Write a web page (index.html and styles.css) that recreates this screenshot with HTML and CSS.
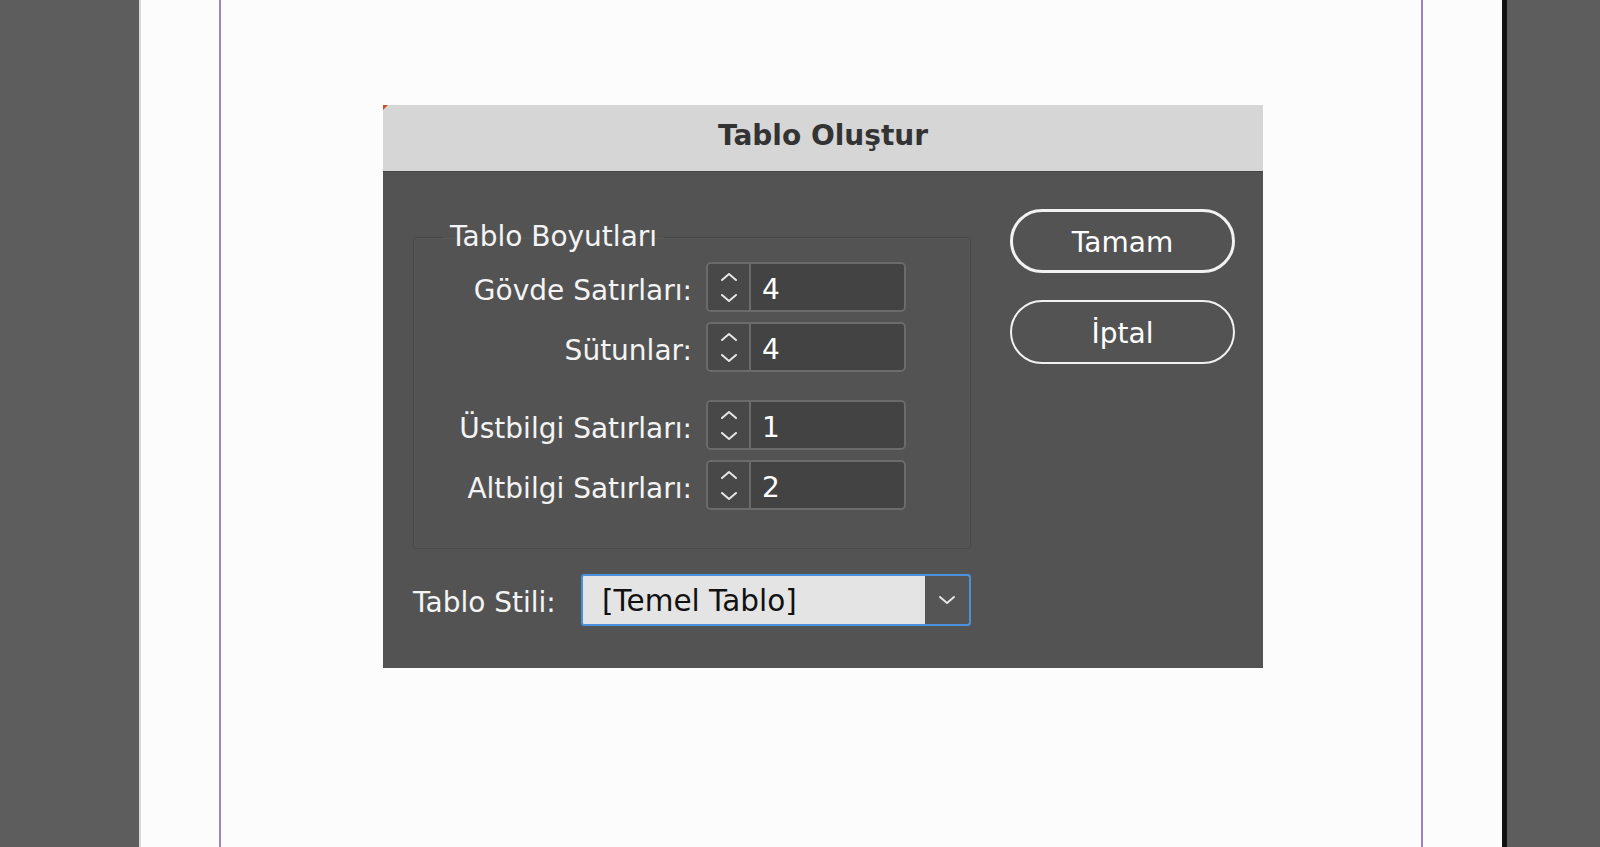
FILE: index.html
```html
<!DOCTYPE html>
<html lang="tr">
<head>
    <meta charset="UTF-8">
    <title>Tablo Oluştur</title>
    <link rel="stylesheet" href="styles.css">
</head>
<body>
<div class="desk">
    <div class="pasteboard"></div>
    <div class="page">
        <div class="margins"></div>
    </div>
    <div class="page-edge"></div>
    <div class="pasteboard pasteboard-right"></div>
</div>

<div class="dialog">
    <div class="dialog-title">Tablo Oluştur</div>
    <div class="dialog-body">
        <div class="dialog-main">
            <fieldset class="group">
                <legend>Tablo Boyutları</legend>

                <div class="field">
                    <label>Gövde Satırları:</label>
                    <div class="spinner">
                        <div class="stepper">
                            <svg width="18" height="9" viewBox="0 0 18 9"><polyline points="2,8 9,2 16,8"/></svg>
                            <svg width="18" height="9" viewBox="0 0 18 9"><polyline points="2,1 9,7 16,1"/></svg>
                        </div>
                        <div class="value">4</div>
                    </div>
                </div>
                <div class="field">
                    <label>Sütunlar:</label>
                    <div class="spinner">
                        <div class="stepper">
                            <svg width="18" height="9" viewBox="0 0 18 9"><polyline points="2,8 9,2 16,8"/></svg>
                            <svg width="18" height="9" viewBox="0 0 18 9"><polyline points="2,1 9,7 16,1"/></svg>
                        </div>
                        <div class="value">4</div>
                    </div>
                </div>

                <div class="field field-split">
                    <label>Üstbilgi Satırları:</label>
                    <div class="spinner">
                        <div class="stepper">
                            <svg width="18" height="9" viewBox="0 0 18 9"><polyline points="2,8 9,2 16,8"/></svg>
                            <svg width="18" height="9" viewBox="0 0 18 9"><polyline points="2,1 9,7 16,1"/></svg>
                        </div>
                        <div class="value">1</div>
                    </div>
                </div>
                <div class="field">
                    <label>Altbilgi Satırları:</label>
                    <div class="spinner">
                        <div class="stepper">
                            <svg width="18" height="9" viewBox="0 0 18 9"><polyline points="2,8 9,2 16,8"/></svg>
                            <svg width="18" height="9" viewBox="0 0 18 9"><polyline points="2,1 9,7 16,1"/></svg>
                        </div>
                        <div class="value">2</div>
                    </div>
                </div>
            </fieldset>

            <div class="style-row">
                <label>Tablo Stili:</label>
                <div class="select">
                    <div class="select-text">[Temel Tablo]</div>
                    <div class="select-arrow">
                        <svg width="18" height="10" viewBox="0 0 18 10"><polyline points="2,2 9,8 16,2"/></svg>
                    </div>
                </div>
            </div>
        </div>

        <div class="dialog-buttons">
            <div class="btn btn-default">Tamam</div>
            <div class="btn">İptal</div>
        </div>
    </div>
</div>
</body>
</html>
```

FILE: styles.css
```css
* {
    box-sizing: border-box;
}

html, body {
    margin: 0;
    padding: 0;
    height: 100%;
}

body {
    font-family: "DejaVu Sans", Verdana, sans-serif;
    overflow: hidden;
    background: #5d5d5d;
}

/* document window behind the dialog */
.desk {
    display: flex;
    height: 847px;
}

.pasteboard {
    width: 139px;
    background: #5d5d5d;
}

.pasteboard-right {
    flex: 1;
}

.page {
    width: 1363px;
    background: #fcfcfc;
    border-left: 2px solid #d9d9d9;
    padding-left: 78px;
}

.margins {
    width: 1204px;
    height: 100%;
    border-left: 2px solid #9b82c6;
    border-right: 2px solid #9b82c6;
}

.page-edge {
    width: 5px;
    background: #121212;
}

/* the modal */
.dialog {
    position: absolute;
    left: 383px;
    top: 105px;
    width: 880px;
    height: 563px;
    background: #535353;
    color: #f4f4f4;
}

.dialog:before {
    content: "";
    position: absolute;
    left: 0;
    top: 0;
    border-top: 5px solid #c8502e;
    border-right: 5px solid transparent;
}

.dialog-title {
    height: 67px;
    line-height: 62px;
    background: #d6d6d6;
    color: #333;
    font-size: 28px;
    font-weight: bold;
    text-align: center;
    border-bottom: 1px solid #474747;
}

.dialog-body {
    display: flex;
    padding: 37px 28px 0 30px;
}

.dialog-main {
    width: 558px;
    margin-right: 39px;
}

.group {
    margin: 11px 0 0 0;
    padding: 8px 0 38px 0;
    border: 1px solid #494949;
    border-radius: 4px;
    box-shadow: inset 0 0 0 1px rgba(255, 255, 255, 0.03);
}

.group legend {
    margin-left: 29px;
    padding: 0 7px;
    font-size: 28px;
    line-height: 34px;
}

.field {
    display: grid;
    grid-template-columns: 278px 200px;
    column-gap: 14px;
    align-items: center;
    margin-top: 10px;
}

.field:first-of-type {
    margin-top: 0;
}

.field-split {
    margin-top: 28px;
}

.field label,
.style-row label {
    padding-top: 6px;
    font-size: 28px;
    text-align: right;
    white-space: nowrap;
}

.spinner {
    display: flex;
    height: 50px;
    border: 2px solid #6b6b6b;
    border-radius: 5px;
    background: #434343;
    overflow: hidden;
}

.stepper {
    width: 43px;
    display: flex;
    flex-direction: column;
    align-items: center;
    justify-content: center;
    gap: 13px;
    background: #484848;
    border-right: 2px solid #6b6b6b;
}

.stepper svg,
.select-arrow svg {
    display: block;
    fill: none;
    stroke: #e6e6e6;
    stroke-width: 2;
    stroke-linecap: round;
    stroke-linejoin: round;
}

.value {
    flex: 1;
    padding: 6px 0 0 11px;
    font-size: 28px;
    line-height: 40px;
    color: #fff;
}

.style-row {
    display: flex;
    align-items: center;
    justify-content: space-between;
    margin-top: 25px;
}

.style-row label {
    padding-top: 4px;
}

.select {
    display: flex;
    width: 390px;
    height: 52px;
    border: 2px solid #4a90dc;
    border-radius: 3px;
    background: #e4e4e4;
    overflow: hidden;
}

.select-text {
    flex: 1;
    padding: 5px 0 0 19px;
    font-size: 29.5px;
    line-height: 40px;
    color: #111;
}

.select-arrow {
    width: 44px;
    display: flex;
    align-items: center;
    justify-content: center;
    background: #555;
}

.dialog-buttons {
    width: 225px;
    display: flex;
    flex-direction: column;
    gap: 27px;
}

.btn {
    height: 64px;
    padding-top: 6px;
    border: 2px solid #f2f2f2;
    border-radius: 32px;
    font-size: 28px;
    line-height: 52px;
    text-align: center;
    color: #fff;
}

.btn-default {
    border-width: 3px;
    line-height: 50px;
}
```
